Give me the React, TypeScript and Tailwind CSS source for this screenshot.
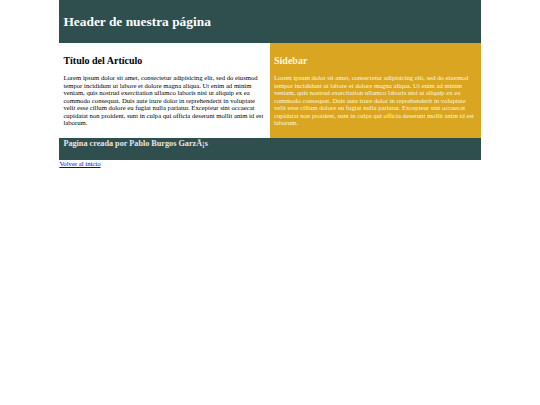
export default function App() {
  return (
    <div className="min-h-screen bg-white font-['Liberation_Serif',serif]">
      <div className="w-[78%] mx-auto">
        <header className="h-[43px] bg-[#2f4f4f] px-[4px] flex items-center">
          <h1 className="text-[13.4px] leading-[15px] font-bold text-white">Header de nuestra página</h1>
        </header>

        <main className="flex">
          <article className="w-1/2 bg-white px-[4px] pt-[12px] pb-[11px]">
            <h2 className="text-[10px] leading-[11px] font-bold text-black">Título del Artículo</h2>
            <p className="mt-[8px] text-[6.7px] leading-[7.5px] text-black">
              Lorem ipsum dolor sit amet, consectetur adipisicing elit, sed do eiusmod tempor incididunt ut labore et
              dolore magna aliqua. Ut enim ad minim veniam, quis nostrud exercitation ullamco laboris nisi ut aliquip ex
              ea commodo consequat. Duis aute irure dolor in reprehenderit in voluptate velit esse cillum dolore eu
              fugiat nulla pariatur. Excepteur sint occaecat cupidatat non proident, sunt in culpa qui officia deserunt
              mollit anim id est laborum.
            </p>
          </article>
          <aside className="w-1/2 bg-[#daa520] px-[4px] pt-[12px] pb-[11px]">
            <h2 className="text-[10px] leading-[11px] font-bold text-[#fff8dc]">Sidebar</h2>
            <p className="mt-[8px] text-[6.7px] leading-[7.5px] text-[#fff8dc]">
              Lorem ipsum dolor sit amet, consectetur adipisicing elit, sed do eiusmod tempor incididunt ut labore et
              dolore magna aliqua. Ut enim ad minim veniam, quis nostrud exercitation ullamco laboris nisi ut aliquip ex
              ea commodo consequat. Duis aute irure dolor in reprehenderit in voluptate velit esse cillum dolore eu
              fugiat nulla pariatur. Excepteur sint occaecat cupidatat non proident, sunt in culpa qui officia deserunt
              mollit anim id est laborum.
            </p>
          </aside>
        </main>

        <footer className="h-[22px] bg-[#2f4f4f] px-[4px] pt-[1px]">
          <h3 className="text-[8.2px] leading-[9px] font-bold text-[#e6e6e6]">Pagina creada por Pablo Burgos GarzÃ¡s</h3>
        </footer>

        <a href="#" className="block w-fit text-[6.7px] leading-[7.5px] text-[#0000ee] underline">
          Volver al inicio
        </a>
      </div>
    </div>
  )
}
